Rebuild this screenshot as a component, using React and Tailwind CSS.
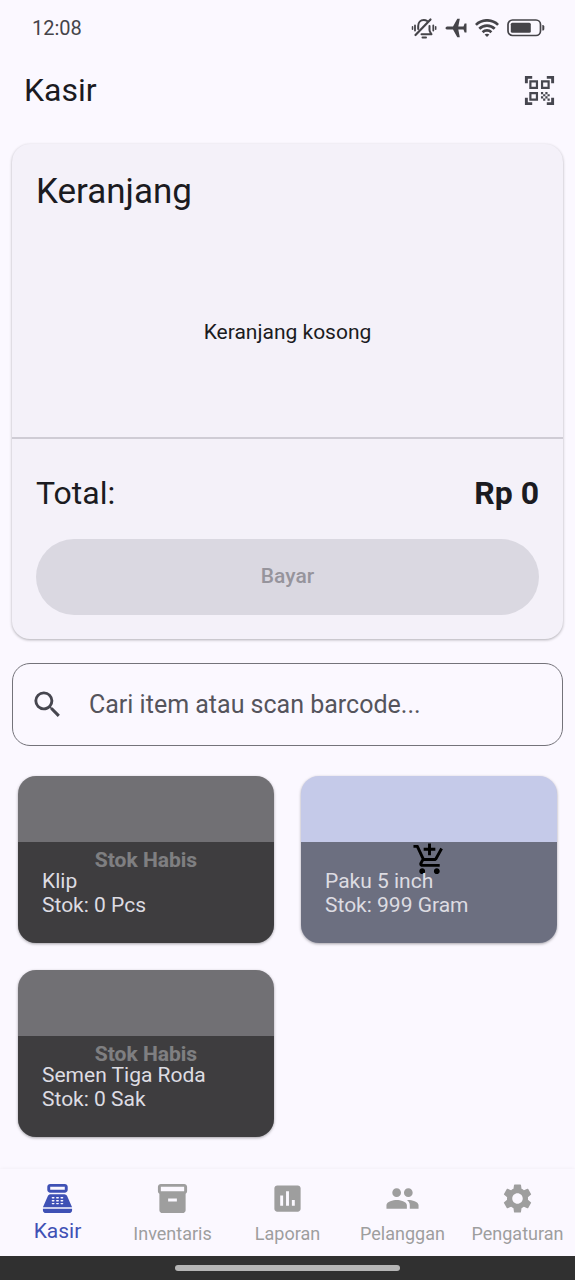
import {
  MdAddShoppingCart,
  MdAssessment,
  MdInventory2,
  MdPeople,
  MdPointOfSale,
  MdQrCodeScanner,
  MdSearch,
  MdSettings,
} from "react-icons/md";

const products = [
  { name: "Klip", stock: "0 Pcs", available: false },
  { name: "Paku 5 inch", stock: "999 Gram", available: true },
  { name: "Semen Tiga Roda", stock: "0 Sak", available: false },
];

const tabs = [
  { label: "Kasir", Icon: MdPointOfSale, active: true },
  { label: "Inventaris", Icon: MdInventory2 },
  { label: "Laporan", Icon: MdAssessment },
  { label: "Pelanggan", Icon: MdPeople },
  { label: "Pengaturan", Icon: MdSettings },
];

function SilentIcon() {
  return (
    <svg width="26" height="24" viewBox="0 0 26 24" fill="none" stroke="currentColor" strokeWidth="2" strokeLinecap="round">
      <path d="M4.500 19L19.500 3.500" strokeWidth="2.200" />
      <path d="M7.200 13V10C7.200 6.300 9.500 4 12.800 4c1.400 0 2.500.4 3.400 1" />
      <path d="M18.500 10v4c0 1.500 1.200 2.600 2 4.300H10.500" strokeLinejoin="round" />
      <path d="M11.500 21.500h3.500" />
      <path d="M4 9.500v5M22.300 9.500v5" strokeWidth="1.800" />
      <path d="M1.500 10.800v2.400M24.700 10.800v2.400" strokeWidth="1.500" />
    </svg>
  );
}

function PlaneIcon() {
  return (
    <svg width="22" height="20" viewBox="0 0 22 20" fill="currentColor">
      <path d="M0.500 10C0.500 9 1.500 8.400 3 8.400H8L12.300 0.800H14.800L13.300 8.400H18.500L19.600 5.500H21.500V14.500H19.600L18.500 11.600H13.300L14.800 19.200H12.300L8 11.600H3C1.500 11.600 0.500 11 0.500 10Z" />
    </svg>
  );
}

function WifiIcon() {
  return (
    <svg width="24" height="18" viewBox="0 0 24 18" fill="none" stroke="currentColor" strokeWidth="2.700">
      <path d="M0.900 5.900C7 -0.200 17 -0.200 23.100 5.900" />
      <path d="M4.300 9.700C8.500 5.500 15.500 5.500 19.700 9.700" />
      <path d="M7.600 13.200C10 10.800 14 10.800 16.400 13.200" />
      <path d="M12 18L9.600 15.600C11 14.400 13 14.400 14.400 15.600Z" fill="currentColor" stroke="none" />
    </svg>
  );
}

function BatteryIcon() {
  return (
    <svg width="38" height="18" viewBox="0 0 38 18">
      <rect x="1" y="1" width="32.500" height="15.500" rx="4.500" fill="none" stroke="currentColor" strokeWidth="1.700" />
      <rect x="3.800" y="3.800" width="20" height="10" rx="1.500" fill="currentColor" />
      <path d="M35.300 6h0.500a1.500 1.500 0 0 1 1.500 1.500v2.500a1.500 1.500 0 0 1-1.500 1.500H35.300Z" fill="currentColor" />
    </svg>
  );
}

function ProductCard({ name, stock, available }) {
  return (
    <button
      type="button"
      disabled={!available}
      className={`relative flex h-[167px] flex-col justify-end overflow-hidden rounded-[18px] text-left text-[21px] leading-6 shadow-[0_1px_3px_rgba(0,0,0,0.35)] ${
        available ? "bg-[#c5cae9]" : "bg-[#717074]"
      }`}
    >
      <span className="absolute inset-0 flex items-center justify-center font-bold text-[#e8e8ec]">
        {available ? <MdAddShoppingCart size={35} className="text-black" /> : "Stok Habis"}
      </span>
      <span className="relative flex h-[101px] w-full flex-col justify-center bg-black/45 px-6 text-[#dddce2]">
        <span>{name}</span>
        <span>Stok: {stock}</span>
      </span>
    </button>
  );
}

export default function App() {
  return (
    <div className="flex min-h-screen flex-col bg-[#fbf8ff] font-['Roboto',sans-serif] text-[#1b1b21]">
      <div className="flex h-14 items-center justify-between pr-[30px] pl-8 text-[#454449]">
        <span className="text-xl">12:08</span>
        <div className="flex items-center gap-2">
          <SilentIcon />
          <PlaneIcon />
          <WifiIcon />
          <BatteryIcon />
        </div>
      </div>

      <header className="flex h-[68px] items-center justify-between pr-[18px] pl-6">
        <h1 className="text-[32px] leading-10">Kasir</h1>
        <button type="button" aria-label="Pindai barcode" className="text-[#46464f]">
          <MdQrCodeScanner size={35} />
        </button>
      </header>

      <main className="flex flex-1 flex-col px-3 pt-5 pb-8">
        <section className="rounded-[18px] bg-[#f4f1f9] shadow-[0_1px_3px_rgba(0,0,0,0.3)]">
          <h2 className="px-6 pt-6 text-[35px] leading-[48px]">Keranjang</h2>
          <p className="flex h-[221px] items-center justify-center pt-3 text-[21px]">Keranjang kosong</p>
          <div className="border-t-2 border-[#cfccd5] px-6 pt-[30px] pb-6">
            <div className="flex items-center justify-between text-[32px] leading-[48px]">
              <span>Total:</span>
              <span className="font-bold">Rp 0</span>
            </div>
            <button
              type="button"
              disabled
              className="mt-[22px] h-[76px] w-full rounded-full bg-[#dad8e1] text-[21px] font-medium text-[#96949c]"
            >
              Bayar
            </button>
          </div>
        </section>

        <label className="mt-6 flex h-[83px] items-center rounded-[18px] border border-[#74737a] pl-[17px] text-[#46464f]">
          <MdSearch size={35} className="shrink-0" />
          <input
            type="text"
            aria-label="Cari item"
            placeholder="Cari item atau scan barcode..."
            className="ml-6 min-w-0 flex-1 bg-transparent text-[25px] outline-none placeholder:text-[#55545c]"
          />
        </label>

        <div className="mt-[30px] grid grid-cols-2 gap-[27px] px-[6px]">
          {products.map((product) => (
            <ProductCard key={product.name} {...product} />
          ))}
        </div>
      </main>

      <nav className="grid h-[87px] grid-cols-5 bg-[#fbf8ff] shadow-[0_-1px_3px_rgba(0,0,0,0.03)]">
        {tabs.map(({ label, Icon, active }) => (
          <a
            key={label}
            href="#"
            aria-current={active ? "page" : undefined}
            className={`flex flex-col items-center pt-3 ${
              active ? "text-[21px] leading-[30px] text-[#3f51b5]" : "text-lg leading-9 text-[#9e9e9e]"
            }`}
          >
            <Icon size={35} className="shrink-0" />
            {label}
          </a>
        ))}
      </nav>
      <div className="flex h-6 items-center justify-center bg-[#303030]">
        <div className="h-[6px] w-[225px] rounded-full bg-[#b5b5b5]" />
      </div>
    </div>
  );
}
